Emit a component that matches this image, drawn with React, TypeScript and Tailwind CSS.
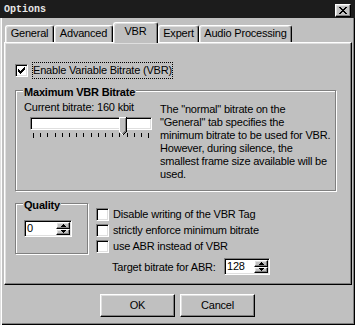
import React from "react";

const sunken =
  "border border-t-[#808080] border-l-[#808080] border-b-white border-r-white shadow-[inset_1px_1px_0_#000,inset_-1px_-1px_0_#dfdfdf]";
const raised =
  "border border-t-white border-l-white border-b-black border-r-black shadow-[inset_-1px_-1px_0_#808080,inset_1px_1px_0_#dfdfdf]";
const etched =
  "border border-[#808080] shadow-[inset_1px_1px_0_#fff,1px_1px_0_#fff]";

function CheckBox({ checked }: { checked?: boolean }) {
  return (
    <div className={`w-[13px] h-[13px] bg-white shrink-0 flex items-center justify-center ${sunken}`}>
      {checked && (
        <svg width="7" height="7" viewBox="0 0 7 7" shapeRendering="crispEdges">
          <path
            fill="#000"
            d="M6 0h1v1h-1z M5 1h2v1h-2z M0 2h1v1h-1z M4 2h3v1h-3z M0 3h2v1h-2z M3 3h3v1h-3z M0 4h5v1h-5z M1 5h3v1h-3z M2 6h1v1h-1z"
          />
        </svg>
      )}
    </div>
  );
}

function SpinButton({ up }: { up?: boolean }) {
  return (
    <div className={`flex-1 bg-[#c0c0c0] flex items-center justify-center ${raised}`}>
      <svg width="5" height="3" viewBox="0 0 5 3" shapeRendering="crispEdges">
        <path fill="#000" d={up ? "M2 0h1v1h-1z M1 1h3v1h-3z M0 2h5v1h-5z" : "M0 0h5v1h-5z M1 1h3v1h-3z M2 2h1v1h-1z"} />
      </svg>
    </div>
  );
}

function Spinner({ value, width }: { value: string; width: string }) {
  return (
    <div className={`h-[17px] ${width} bg-white flex items-stretch ${sunken}`}>
      <div className="flex-1 pl-[2px] leading-[15px] whitespace-nowrap">{value}</div>
      <div className="w-[15px] flex flex-col pt-[1px] pb-[1px] pr-[1px]">
        <SpinButton up />
        <SpinButton />
      </div>
    </div>
  );
}

function Tab({ label, width, selected }: { label: string; width: string; selected?: boolean }) {
  if (selected) {
    return (
      <div
        className={`${width} h-[21px] -mb-[1px] relative z-10 bg-[#c0c0c0] border-t border-l border-white border-r border-r-black rounded-t-[3px] shadow-[inset_-1px_0_0_#808080,inset_1px_1px_0_#dfdfdf] text-center pt-[2px] leading-[13px]`}
      >
        {label}
      </div>
    );
  }
  return (
    <div
      className={`${width} h-[17px] bg-[#c0c0c0] border-t border-l border-white border-r border-r-black rounded-t-[3px] shadow-[inset_-1px_0_0_#808080,inset_1px_1px_0_#dfdfdf] text-center pt-[1px] leading-[13px]`}
    >
      {label}
    </div>
  );
}

function Ticks() {
  const xs = Array.from({ length: 17 }, (_, i) => Math.round(3 + i * 7.2) + 0.5);
  return (
    <svg width="122" height="5" viewBox="0 0 122 5" shapeRendering="crispEdges">
      {xs.map((x, i) => (
        <line key={i} x1={x} y1={0} x2={x} y2={i === 0 || i === 16 ? 5 : 4} stroke="#000" strokeWidth="1" />
      ))}
    </svg>
  );
}

function Thumb() {
  return (
    <svg width="8" height="19" viewBox="0 0 8 19" shapeRendering="crispEdges">
      <path d="M0 0H8V14L4 18L0 14Z" fill="#c0c0c0" />
      <path d="M0.5 14V0.5H7" stroke="#fff" fill="none" />
      <path d="M7.5 0V14.5L4 18" stroke="#000" fill="none" />
      <path d="M6.5 1V14L3.5 17" stroke="#808080" fill="none" />
      <path d="M0.5 14.5L4 18" stroke="#fff" fill="none" />
    </svg>
  );
}

export default function App() {
  return (
    <div className="w-[355px] h-[325px] bg-[#c0c0c0] flex flex-col overflow-hidden text-black text-[11px] leading-[13px] tracking-[-0.2px] font-['Liberation_Sans',Arial,sans-serif] select-none">
      {/* Title bar */}
      <div className="h-[18px] bg-[#1c1c1c] flex items-start justify-between pl-[4px] pr-[4px] shrink-0">
        <span className="mt-[4px] font-['Liberation_Mono',monospace] font-bold text-[10px] leading-[12px] tracking-normal text-[#e8e8e8]">
          Options
        </span>
        <div className={`mt-[4px] w-[16px] h-[13px] bg-[#c0c0c0] flex items-center justify-center ${raised}`}>
          <svg width="8" height="7" viewBox="0 0 8 7" shapeRendering="crispEdges">
            <path
              fill="#000"
              d="M0 0h2v1h-2z M6 0h2v1h-2z M1 1h2v1h-2z M5 1h2v1h-2z M2 2h4v1h-4z M3 3h2v1h-2z M2 4h4v1h-4z M1 5h2v1h-2z M5 5h2v1h-2z M0 6h2v1h-2z M6 6h2v1h-2z"
            />
          </svg>
        </div>
      </div>

      {/* Body */}
      <div className="flex-1 flex flex-col shadow-[inset_1px_0_0_#dfdfdf,inset_2px_0_0_#fff,inset_-1px_-1px_0_#000,inset_-2px_-2px_0_#808080]">
        {/* Tabs */}
        <div className="h-[24px] flex items-end pl-[5px] shrink-0">
          <Tab label="General" width="w-[49px]" />
          <Tab label="Advanced" width="w-[59px]" />
          <Tab label="VBR" width="w-[45px]" selected />
          <Tab label="Expert" width="w-[41px]" />
          <Tab label="Audio Processing" width="w-[93px]" />
        </div>

        {/* Panel */}
        <div className={`ml-[4px] mr-[3px] h-[243px] shrink-0 bg-[#c0c0c0] flex flex-col ${raised}`}>
          {/* Enable VBR */}
          <div className="ml-[10px] mt-[19px] flex items-center gap-[4px]">
            <CheckBox checked />
            <span className="px-[1px] py-[2px] outline outline-1 outline-dotted outline-black -outline-offset-1 whitespace-nowrap">
              Enable Variable Bitrate (VBR)
            </span>
          </div>

          {/* Maximum VBR Bitrate group */}
          <div className={`relative ml-[10px] mt-[11px] w-[321px] h-[101px] ${etched}`}>
            <span className="absolute left-[7px] -top-[5px] px-[1px] bg-[#c0c0c0] font-bold whitespace-nowrap">
              Maximum VBR Bitrate
            </span>
            <div className="flex">
              <div className="w-[144px] pl-[8px] pt-[10px] shrink-0">
                <div className="whitespace-nowrap">Current bitrate: 160 kbit</div>
                <div className="relative ml-[6px] mt-[3px] w-[122px]">
                  <div className={`h-[13px] w-[122px] bg-white ${sunken}`} />
                  <div className="mt-[3px]">
                    <Ticks />
                  </div>
                  <div className="absolute left-[89px] top-0">
                    <Thumb />
                  </div>
                </div>
              </div>
              <div className="pt-[12px] whitespace-nowrap">
                The &quot;normal&quot; bitrate on the
                <br />
                &quot;General&quot; tab specifies the
                <br />
                minimum bitrate to be used for VBR.
                <br />
                However, during silence, the
                <br />
                smallest frame size available will be
                <br />
                used.
              </div>
            </div>
          </div>

          {/* Bottom row */}
          <div className="flex items-start ml-[10px] mt-[12px]">
            <div className={`relative w-[73px] h-[51px] shrink-0 ${etched}`}>
              <span className="absolute left-[7px] -top-[5px] px-[1px] bg-[#c0c0c0] font-bold whitespace-nowrap">
                Quality
              </span>
              <div className="ml-[8px] mt-[16px]">
                <Spinner value="0" width="w-[48px]" />
              </div>
            </div>

            <div className="ml-[8px] pt-[5px] flex flex-col">
              <div className="flex flex-col gap-[3px]">
                <div className="h-[13px] flex items-center gap-[4px]">
                  <CheckBox />
                  <span className="whitespace-nowrap">Disable writing of the VBR Tag</span>
                </div>
                <div className="h-[13px] flex items-center gap-[4px]">
                  <CheckBox />
                  <span className="whitespace-nowrap">strictly enforce minimum bitrate</span>
                </div>
                <div className="h-[13px] flex items-center gap-[4px]">
                  <CheckBox />
                  <span className="whitespace-nowrap">use ABR instead of VBR</span>
                </div>
              </div>
              <div className="mt-[5px] flex items-center">
                <span className="w-[128px] shrink-0 pl-[16px] pt-[2px] whitespace-nowrap">Target bitrate for ABR:</span>
                <Spinner value="128" width="w-[46px]" />
              </div>
            </div>
          </div>
        </div>

        {/* Buttons */}
        <div className="mt-[9px] flex justify-center gap-[5px]">
          <button className={`w-[75px] h-[23px] bg-[#c0c0c0] text-[11px] ${raised}`}>OK</button>
          <button className={`w-[75px] h-[23px] bg-[#c0c0c0] text-[11px] ${raised}`}>Cancel</button>
        </div>
      </div>
    </div>
  );
}
